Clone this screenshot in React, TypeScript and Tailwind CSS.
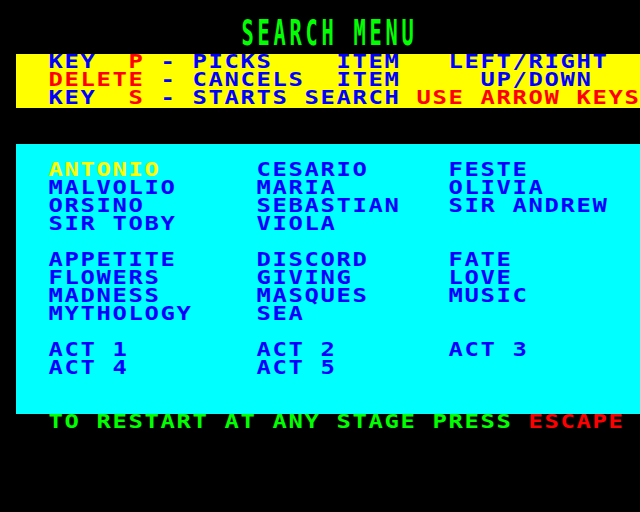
import React from "react";

type Seg = [number, string, string?];

const BLUE = "text-[#0000ff]";
const RED = "text-[#ff0000]";
const YEL = "text-[#ffff00]";
const GRN = "text-[#00ff00]";

function buildCells(segs: Seg[], def: string) {
  const cells: { ch: string; c: string }[] = [];
  for (let i = 1; i < 40; i++) cells.push({ ch: "", c: def });
  segs.forEach(([col, text, color]) => {
    for (let k = 0; k < text.length; k++) {
      const idx = col + k - 1;
      if (idx >= 0 && idx < cells.length) {
        cells[idx] = { ch: text[k] === " " ? "" : text[k], c: color || def };
      }
    }
  });
  return cells;
}

function Row({ segs, def = BLUE }: { segs: Seg[]; def?: string }) {
  const cells = buildCells(segs, def);
  return (
    <div className="flex h-[18px]">
      {cells.map((cell, i) => (
        <span key={i} className={`flex w-4 h-[18px] shrink-0 justify-center ${cell.c}`}>
          {cell.ch ? (
            <span className="block text-[15.4px] leading-[18px] origin-[center_13.8px] scale-x-[1.55] scale-y-[1.26]">
              {cell.ch}
            </span>
          ) : null}
        </span>
      ))}
    </div>
  );
}

function TitleRow({ segs }: { segs: Seg[] }) {
  const cells = buildCells(segs, GRN);
  return (
    <div className="flex h-[36px]">
      {cells.map((cell, i) => (
        <span key={i} className={`flex w-4 h-[36px] shrink-0 justify-center ${cell.c}`}>
          {cell.ch ? (
            <span className="block text-[15.4px] font-bold leading-[18px] origin-top scale-x-[1.32] scale-y-[2.25] -translate-y-[5px]">
              {cell.ch}
            </span>
          ) : null}
        </span>
      ))}
    </div>
  );
}

const yellowRows: Seg[][] = [
  [[3, "KEY"], [8, "P", RED], [10, "-"], [12, "PICKS"], [21, "ITEM"], [28, "LEFT/RIGHT"]],
  [[3, "DELETE", RED], [10, "-"], [12, "CANCELS"], [21, "ITEM"], [30, "UP/DOWN"]],
  [[3, "KEY"], [8, "S", RED], [10, "-"], [12, "STARTS"], [19, "SEARCH"], [26, "USE ARROW KEYS", RED]],
];

const cyanRows: Seg[][] = [
  [],
  [[3, "ANTONIO", YEL], [16, "CESARIO"], [28, "FESTE"]],
  [[3, "MALVOLIO"], [16, "MARIA"], [28, "OLIVIA"]],
  [[3, "ORSINO"], [16, "SEBASTIAN"], [28, "SIR ANDREW"]],
  [[3, "SIR TOBY"], [16, "VIOLA"]],
  [],
  [[3, "APPETITE"], [16, "DISCORD"], [28, "FATE"]],
  [[3, "FLOWERS"], [16, "GIVING"], [28, "LOVE"]],
  [[3, "MADNESS"], [16, "MASQUES"], [28, "MUSIC"]],
  [[3, "MYTHOLOGY"], [16, "SEA"]],
  [],
  [[3, "ACT 1"], [16, "ACT 2"], [28, "ACT 3"]],
  [[3, "ACT 4"], [16, "ACT 5"]],
  [],
  [],
];

export default function App() {
  return (
    <div className="w-[640px] h-[512px] bg-black overflow-hidden font-['DejaVu_Sans_Mono',monospace] font-bold">
      <div className="h-[18px]" />
      <div className="ml-4">
        <TitleRow segs={[[15, "SEARCH MENU"]]} />
      </div>
      <div className="ml-4 bg-[#ffff00]">
        {yellowRows.map((r, i) => (
          <Row key={i} segs={r} />
        ))}
      </div>
      <div className="h-[36px]" />
      <div className="ml-4 bg-[#00ffff]">
        {cyanRows.map((r, i) => (
          <Row key={i} segs={r} />
        ))}
      </div>
      <div className="ml-4">
        <Row segs={[[3, "TO RESTART AT ANY STAGE PRESS", GRN], [33, "ESCAPE", RED]]} />
      </div>
    </div>
  );
}
